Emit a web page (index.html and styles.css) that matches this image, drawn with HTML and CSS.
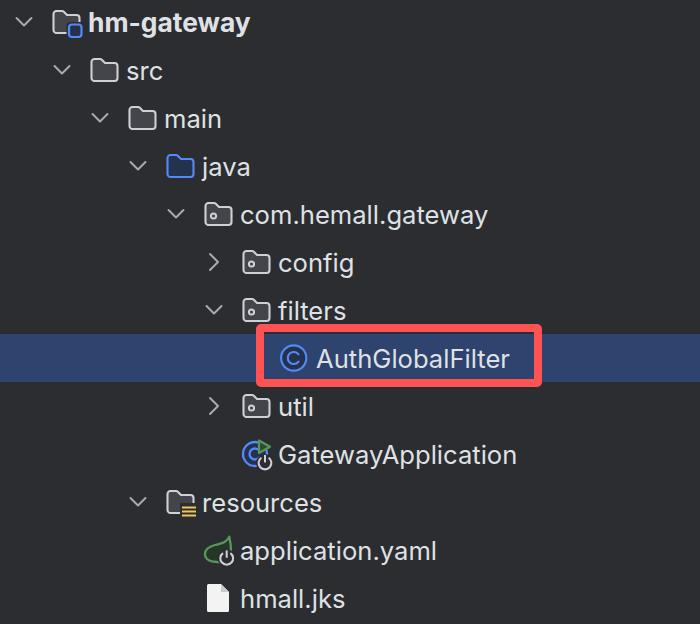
FILE: index.html
```html
<!DOCTYPE html>
<html lang="en">
<head>
<meta charset="utf-8">
<title>Project tree</title>
<link rel="stylesheet" href="styles.css">
</head>
<body>
<svg class="sprite" xmlns="http://www.w3.org/2000/svg">
  <symbol id="down" viewBox="0 0 38 32"><path d="M2.500 12l7.500 7.500 7.500-7.500" fill="none" stroke="#a8abb3" stroke-width="2" stroke-linecap="round" stroke-linejoin="round"/></symbol>
  <symbol id="right" viewBox="0 0 38 32"><path d="M6 8l8 8-8 8" fill="none" stroke="#a8abb3" stroke-width="2" stroke-linecap="round" stroke-linejoin="round"/></symbol>
  <symbol id="folder" viewBox="0 0 32 32" overflow="visible"><path d="M1.500 8a3 3 0 0 1 3-3h5.500a2.500 2.500 0 0 1 1.800.7l3.200 3.300h9.500a3 3 0 0 1 3 3v12a3 3 0 0 1-3 3h-20a3 3 0 0 1-3-3z" fill="#43454a" stroke="#ced0d6" stroke-width="2.100"/></symbol>
  <symbol id="folder-blue" viewBox="0 0 32 32"><path d="M1.500 8a3 3 0 0 1 3-3h5.500a2.500 2.500 0 0 1 1.800.7l3.200 3.300h9.500a3 3 0 0 1 3 3v12a3 3 0 0 1-3 3h-20a3 3 0 0 1-3-3z" fill="#25324d" stroke="#548af7" stroke-width="2.100"/></symbol>
  <symbol id="power" viewBox="0 0 14 14"><path d="M3.800 2.400a5.600 5.600 0 1 0 6.400 0" fill="none" stroke="#ced0d6" stroke-width="1.800"/><path d="M7 0v6.500" stroke="#ced0d6" stroke-width="1.800"/></symbol>
</svg>

<main class="tree">
  <div class="row level-0">
    <svg class="chevron"><use href="#down" width="38" height="32"/></svg>
    <svg class="icon" viewBox="0 0 32 32"><use href="#folder" width="32" height="32"/><rect x="14.500" y="16" width="17" height="17" rx="4" fill="#2b2d30"/><rect x="17" y="18.500" width="12.500" height="12.500" rx="3" fill="#25324d" stroke="#548af7" stroke-width="2.200"/></svg>
    <span class="label bold">hm-gateway</span>
  </div>
  <div class="row level-1">
    <svg class="chevron"><use href="#down" width="38" height="32"/></svg>
    <svg class="icon" viewBox="0 0 32 32"><use href="#folder" width="32" height="32"/></svg>
    <span class="label">src</span>
  </div>
  <div class="row level-2">
    <svg class="chevron"><use href="#down" width="38" height="32"/></svg>
    <svg class="icon" viewBox="0 0 32 32"><use href="#folder" width="32" height="32"/></svg>
    <span class="label">main</span>
  </div>
  <div class="row level-3">
    <svg class="chevron"><use href="#down" width="38" height="32"/></svg>
    <svg class="icon" viewBox="0 0 32 32"><use href="#folder-blue" width="32" height="32"/></svg>
    <span class="label">java</span>
  </div>
  <div class="row level-4">
    <svg class="chevron"><use href="#down" width="38" height="32"/></svg>
    <svg class="icon" viewBox="0 0 32 32"><use href="#folder" width="32" height="32"/><circle cx="9.500" cy="18" r="2.600" fill="none" stroke="#ced0d6" stroke-width="2"/></svg>
    <span class="label">com.hemall.gateway</span>
  </div>
  <div class="row level-5">
    <svg class="chevron"><use href="#right" width="38" height="32"/></svg>
    <svg class="icon" viewBox="0 0 32 32"><use href="#folder" width="32" height="32"/><circle cx="9.500" cy="18" r="2.600" fill="none" stroke="#ced0d6" stroke-width="2"/></svg>
    <span class="label">config</span>
  </div>
  <div class="row level-5">
    <svg class="chevron"><use href="#down" width="38" height="32"/></svg>
    <svg class="icon" viewBox="0 0 32 32"><use href="#folder" width="32" height="32"/><circle cx="9.500" cy="18" r="2.600" fill="none" stroke="#ced0d6" stroke-width="2"/></svg>
    <span class="label">filters</span>
  </div>
  <div class="row level-6 selected">
    <span class="chevron"></span>
    <svg class="icon" viewBox="0 0 32 32"><circle cx="13.700" cy="16" r="12.600" fill="#25324d" stroke="#548af7" stroke-width="2.100"/><path d="M18.500 12.300a6 6 0 1 0 0 7.400" fill="none" stroke="#548af7" stroke-width="2.100" stroke-linecap="round"/></svg>
    <span class="label">AuthGlobalFilter</span>
    <span class="callout"></span>
  </div>
  <div class="row level-5">
    <svg class="chevron"><use href="#right" width="38" height="32"/></svg>
    <svg class="icon" viewBox="0 0 32 32"><use href="#folder" width="32" height="32"/><circle cx="9.500" cy="18" r="2.600" fill="none" stroke="#ced0d6" stroke-width="2"/></svg>
    <span class="label">util</span>
  </div>
  <div class="row level-5">
    <span class="chevron"></span>
    <svg class="icon" viewBox="0 0 32 32"><circle cx="13" cy="16" r="12" fill="#25324d" stroke="#548af7" stroke-width="2.300"/><path d="M17.500 12.800a5.500 5.500 0 1 0 0 6.400" fill="none" stroke="#548af7" stroke-width="2.300" stroke-linecap="round"/><path d="M17 2.500v12.500l11-6.200z" fill="#2f4a33" stroke="#57965c" stroke-width="2.200" stroke-linejoin="round"/><circle cx="23" cy="25" r="9" fill="#2b2d30"/><use href="#power" x="15" y="17" width="16" height="16"/></svg>
    <span class="label">GatewayApplication</span>
  </div>
  <div class="row level-3">
    <svg class="chevron"><use href="#down" width="38" height="32"/></svg>
    <svg class="icon" viewBox="0 0 32 32"><use href="#folder" width="32" height="32"/><rect x="14" y="17" width="19" height="16" fill="#2b2d30"/><path d="M16 21.500h14M16 25.500h14M16 29.500h14" stroke="#f2c55c" stroke-width="2.200"/></svg>
    <span class="label">resources</span>
  </div>
  <div class="row level-4">
    <span class="chevron"></span>
    <svg class="icon" viewBox="0 0 32 32"><path d="M25.300 2.700C23 9 16 9.500 11 11 4 13 .9 16 .9 20c0 4 3.100 7 7.100 7.300L17 28.500c6 0 10-4 10-11 0-5-.7-10.500-1.700-14.800z" fill="#253627" stroke="#57965c" stroke-width="2.300" stroke-linejoin="round"/><circle cx="22.700" cy="24.300" r="9" fill="#2b2d30"/><use href="#power" x="14.700" y="16.300" width="16" height="16"/></svg>
    <span class="label">application.yaml</span>
  </div>
  <div class="row level-4">
    <span class="chevron"></span>
    <svg class="icon" viewBox="0 0 32 32"><path d="M4.500 2h12.500l8 8v18.500a1.500 1.500 0 0 1-1.500 1.500h-19a1.500 1.500 0 0 1-1.500-1.500v-25a1.500 1.500 0 0 1 1.500-1.500z" fill="#f3f3f3"/><path d="M17 2l8 8h-8z" fill="#c9cacc"/></svg>
    <span class="label">hmall.jks</span>
  </div>
</main>
</body>
</html>
```

FILE: styles.css
```css
* {
  box-sizing: border-box;
}

html,
body {
  margin: 0;
  height: 100%;
  overflow: hidden;
  background: #2b2d30;
}

.sprite {
  display: none;
}

.tree {
  display: flex;
  flex-direction: column;
  margin-top: -2px;
  font-family: Inter, "Liberation Sans", sans-serif;
  font-size: 25.6px;
  color: #dfe1e5;
}

.row {
  position: relative;
  display: flex;
  flex: none;
  align-items: center;
  height: 48px;
}

.level-0 { padding-left: 14px; }
.level-1 { padding-left: 52px; }
.level-2 { padding-left: 90px; }
.level-3 { padding-left: 128px; }
.level-4 { padding-left: 166px; }
.level-5 { padding-left: 204px; }
.level-6 { padding-left: 242px; }

.chevron {
  flex: none;
  width: 38px;
  height: 32px;
}

.icon {
  flex: none;
  width: 32px;
  height: 32px;
  margin-right: 4px;
  overflow: visible;
}

.label {
  white-space: nowrap;
}

.bold {
  font-size: 26.4px;
  font-weight: 700;
}

.selected {
  background: #2e436e;
}

.callout {
  position: absolute;
  left: 256px;
  top: -10px;
  width: 286px;
  height: 63px;
  border: 8px solid #ff5252;
  border-radius: 5px;
}
```
